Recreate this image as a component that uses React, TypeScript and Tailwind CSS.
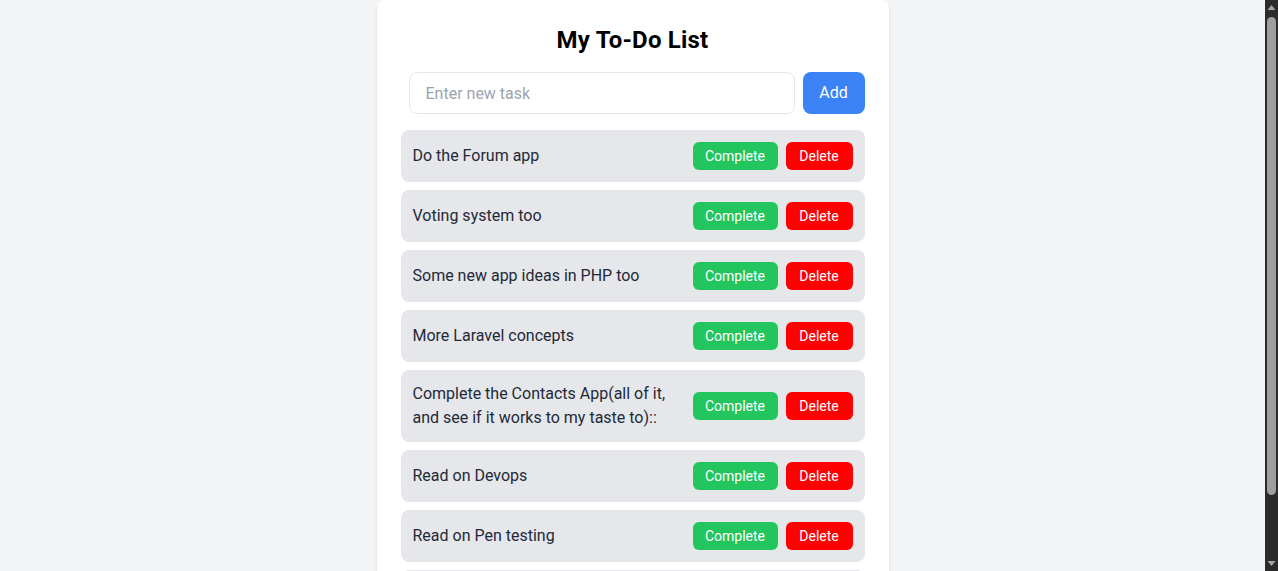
import React from "react";

const tasks = [
  "Do the Forum app",
  "Voting system too",
  "Some new app ideas in PHP too",
  "More Laravel concepts",
  "Complete the Contacts App(all of it, and see if it works to my taste to)::",
  "Read on Devops",
  "Read on Pen testing",
  "Learn Docker basics",
];

function Scrollbar() {
  return (
    <div className="w-[13px] h-screen bg-[#2b2b2b] flex flex-col items-center shrink-0">
      <svg width="9" height="14" viewBox="0 0 9 14" className="shrink-0">
        <polygon points="4.5,5 8.5,10 0.5,10" fill="#a3a3a3" />
      </svg>
      <div className="w-[9px] h-[478px] mt-[3px] rounded-[5px] bg-[#9e9e9e]" />
      <div className="flex-1" />
      <svg width="9" height="14" viewBox="0 0 9 14" className="shrink-0">
        <polygon points="0.5,4 8.5,4 4.5,9" fill="#a3a3a3" />
      </svg>
    </div>
  );
}

export default function App() {
  return (
    <div className="flex h-screen overflow-hidden bg-[#f3f4f6]">
      <div className="flex-1 h-screen overflow-hidden">
        <div className="flex justify-center font-['Roboto',sans-serif]">
          <div className="w-[512px] bg-white rounded-lg shadow-md p-6">
            <h1 className="text-2xl font-bold text-black text-center leading-8 mb-4 tracking-[0.2px]">My To-Do List</h1>
            <div className="flex gap-2 pl-2 mb-4">
              <input
                type="text"
                placeholder="Enter new task"
                className="flex-1 h-[42px] px-4 border border-[#e5e7eb] rounded-lg text-base bg-white placeholder:text-[#9ca3af] outline-none"
              />
              <button className="h-[42px] w-[62px] bg-[#3b82f6] text-white text-base rounded-lg">Add</button>
            </div>
            <ul className="flex flex-col gap-2">
              {tasks.map((t) => (
                <li key={t} className="flex items-center bg-[#e5e7eb] rounded-lg px-3 py-3">
                  <span className="flex-1 text-base leading-6 text-[#1f2937] pr-6">{t}</span>
                  <div className="flex gap-2">
                    <button className="h-7 w-[85px] bg-[#22c55e] text-white text-sm rounded-md">Complete</button>
                    <button className="h-7 w-[67px] bg-[#ff0000] text-white text-sm rounded-md">Delete</button>
                  </div>
                </li>
              ))}
            </ul>
          </div>
        </div>
      </div>
      <Scrollbar />
    </div>
  );
}
